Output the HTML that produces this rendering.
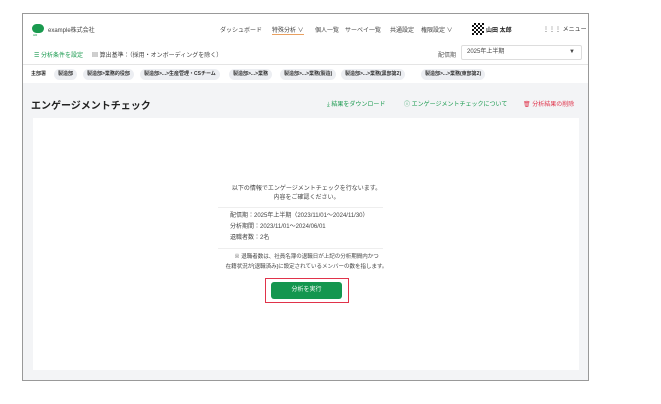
<!DOCTYPE html><html><head><meta charset="utf-8"><style>
*{margin:0;padding:0;box-sizing:border-box}
body{width:661px;height:404px;background:#fff;font-family:"Liberation Sans","Noto Sans CJK JP",sans-serif;position:relative;overflow:hidden;color:#333}
.frame{position:absolute;left:22px;top:13px;width:567px;height:368px;border:1px solid #999;background:#fff;overflow:hidden}
.a{position:absolute;white-space:nowrap}
.s{font-size:6px}
.tag{position:absolute;top:55px;height:11px;border-radius:6px;background:#eceef2;font-size:5px;line-height:11px;padding:0 4px;color:#333;font-weight:bold}
.gray{position:absolute;left:0;top:69px;width:567px;height:299px;background:#f3f4f6}
.card{position:absolute;left:10px;top:104px;width:546px;height:252px;background:#fff}
</style></head><body>
<div class="frame">
 <div class="a" style="left:9px;top:10px;width:12px;height:9px;border-radius:5px;background:#1a9a4f"></div>
 <div class="a" style="left:10px;top:19px;font-size:3px;color:#1a9a4f">HR</div>
 <div class="a s" style="left:25px;top:11px;color:#444">example株式会社</div>
 <div class="a s" style="left:197px;top:11px;color:#444">ダッシュボード</div>
 <div class="a s" style="left:249px;top:11px;color:#444;border-bottom:1px solid #e9a060">特殊分析 ∨</div>
 <div class="a s" style="left:292px;top:11px;color:#444">個人一覧</div>
 <div class="a s" style="left:322px;top:11px;color:#444">サーベイ一覧</div>
 <div class="a s" style="left:367px;top:11px;color:#444">共通設定</div>
 <div class="a s" style="left:398px;top:11px;color:#444">権限設定 ∨</div>
 <div class="a" style="left:449px;top:9px;width:12px;height:12px;background:repeating-conic-gradient(#111 0 25%,#fff 0 50%) 0 0/4px 4px"></div>
 <div class="a s" style="left:463px;top:11px;color:#222;font-weight:bold">山田 太郎</div>
 <div class="a s" style="left:520px;top:10px;color:#333">⋮⋮⋮ メニュー</div>
 <div class="a s" style="left:11px;top:36px;color:#1a9a4f">☰ 分析条件を設定</div>
 <div class="a s" style="left:69px;top:36px;color:#444">▤ 算出基準：（採用・オンボーディングを除く）</div>
 <div class="a s" style="left:415px;top:36px;color:#555">配信期</div>
 <div class="a" style="left:438px;top:31px;width:121px;height:15px;border:1px solid #ddd;border-radius:2px;font-size:6px;line-height:13px;padding-left:5px;color:#444">2025年上半期<span style="position:absolute;right:6px;font-size:6px">▼</span></div>
 <div class="a" style="left:0;top:50px;width:567px;height:1px;background:#e5e5e5"></div>
 <div class="a" style="left:8px;top:55px;font-size:5px;line-height:11px;color:#333;font-weight:bold">主部署</div>
 <div class="tag" style="left:31px">製造部</div>
 <div class="tag" style="left:60px">製造部>業務的役部</div>
 <div class="tag" style="left:117px">製造部>...>生産管理・CSチーム</div>
 <div class="tag" style="left:206px">製造部>...>業務</div>
 <div class="tag" style="left:257px">製造部>...>業務(製造)</div>
 <div class="tag" style="left:318px">製造部>...>業務(黒部第2)</div>
 <div class="tag" style="left:398px">製造部>...>業務(東部第2)</div>
 <div class="gray"></div>
 <div class="a" style="left:8px;top:83px;font-size:10px;font-weight:bold;color:#222">エンゲージメントチェック</div>
 <div class="a s" style="left:304px;top:85px;color:#1a9a4f">⤓ 結果をダウンロード</div>
 <div class="a s" style="left:381px;top:85px;color:#1a9a4f">ⓘ エンゲージメントチェックについて</div>
 <div class="a s" style="left:500px;top:85px;color:#e0334a">🗑 分析結果の削除</div>
 <div class="card"></div>
 <div class="a" style="left:0;top:171px;width:567px;text-align:center;font-size:6px;line-height:9px;color:#444">以下の情報でエンゲージメントチェックを行ないます。<br>内容をご確認ください。</div>
 <div class="a" style="left:195px;top:193px;width:165px;height:1px;background:#eee"></div>
 <div class="a" style="left:207px;top:197px;font-size:6px;line-height:11px;color:#444">配信期：2025年上半期（2023/11/01～2024/11/30）<br>分析期間：2023/11/01～2024/06/01<br>退職者数：2名</div>
 <div class="a" style="left:195px;top:234px;width:165px;height:1px;background:#eee"></div>
 <div class="a" style="left:0;top:238px;width:567px;text-align:center;font-size:5.5px;line-height:10px;color:#444">※ 退職者数は、社員名簿の退職日が上記の分析期間内かつ<br>在籍状況が[退職済み]に設定されているメンバーの数を指します。</div>
 <div class="a" style="left:242px;top:264px;width:84px;height:25px;border:1px solid #e0334a"></div>
 <div class="a" style="left:248px;top:268px;width:71px;height:17px;background:#14964f;border-radius:3px;color:#fff;font-size:6px;text-align:center;line-height:17px">分析を実行</div>
</div>
</body></html>
